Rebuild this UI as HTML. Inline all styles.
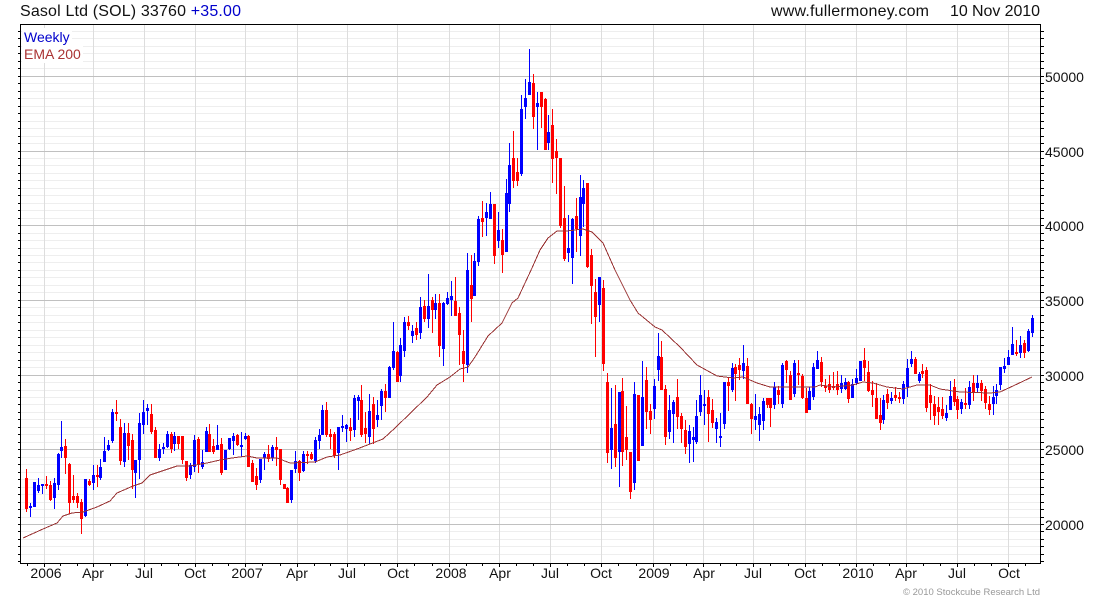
<!DOCTYPE html>
<html><head><meta charset="utf-8"><title>Sasol Ltd (SOL)</title>
<style>
html,body{margin:0;padding:0;background:#fff}
svg{display:block;position:absolute;left:0;top:0}
text{font-family:"Liberation Sans",Arial,sans-serif;font-size:14px;fill:#111}
.r{fill:#f00}.b{fill:#00f}
</style></head><body>
<svg width="1100" height="600" viewBox="0 0 1100 600" xmlns="http://www.w3.org/2000/svg">
<g shape-rendering="crispEdges">
<path fill="none" stroke="#eeeeee" d="M21 554.5H1040M21 546.5H1040M21 539.5H1040M21 531.5H1040M21 517.5H1040M21 509.5H1040M21 502.5H1040M21 494.5H1040M21 487.5H1040M21 479.5H1040M21 472.5H1040M21 464.5H1040M21 457.5H1040M21 442.5H1040M21 434.5H1040M21 427.5H1040M21 419.5H1040M21 412.5H1040M21 404.5H1040M21 397.5H1040M21 390.5H1040M21 382.5H1040M21 367.5H1040M21 360.5H1040M21 352.5H1040M21 345.5H1040M21 337.5H1040M21 330.5H1040M21 322.5H1040M21 315.5H1040M21 307.5H1040M21 292.5H1040M21 285.5H1040M21 277.5H1040M21 270.5H1040M21 262.5H1040M21 255.5H1040M21 248.5H1040M21 240.5H1040M21 233.5H1040M21 218.5H1040M21 210.5H1040M21 203.5H1040M21 195.5H1040M21 188.5H1040M21 180.5H1040M21 173.5H1040M21 165.5H1040M21 158.5H1040M21 143.5H1040M21 136.5H1040M21 128.5H1040M21 121.5H1040M21 113.5H1040M21 106.5H1040M21 98.5H1040M21 91.5H1040M21 83.5H1040M21 68.5H1040M21 61.5H1040M21 53.5H1040M21 46.5H1040M21 38.5H1040M21 31.5H1040"/>
<path fill="none" stroke="#dddddd" d="M44.5 25V563M93.5 25V563M144.5 25V563M195.5 25V563M245.5 25V563M297.5 25V563M347.5 25V563M397.5 25V563M449.5 25V563M499.5 25V563M550.5 25V563M601.5 25V563M653.5 25V563M703.5 25V563M753.5 25V563M805.5 25V563M856.5 25V563M906.5 25V563M957.5 25V563M1008.5 25V563"/>
<path fill="none" stroke="#c0c0c0" d="M21 524.5H1040M21 449.5H1040M21 375.5H1040M21 300.5H1040M21 225.5H1040M21 151.5H1040M21 76.5H1040"/>
<rect x="22" y="28" width="50" height="18" fill="#fff"/>
<rect x="22" y="46" width="61" height="17" fill="#fff"/>
<path class="r" d="M26 469h1V512h-1zM25 478h3V509h-3z"/>
<path class="b" d="M30 503h1V517h-1zM29 506h3V508h-3z"/>
<path class="b" d="M33 482h3V507h-3z"/>
<path class="b" d="M38 478h1V493h-1zM37 485h3V491h-3z"/>
<path class="b" d="M42 484h1V494h-1zM41 484h3V486h-3z"/>
<path class="r" d="M46 476h1V489h-1zM45 484h3V486h-3z"/>
<path class="r" d="M50 481h1V501h-1zM49 485h3V500h-3z"/>
<path class="b" d="M54 478h1V509h-1zM53 483h3V498h-3z"/>
<path class="b" d="M58 453h1V490h-1zM57 454h3V485h-3z"/>
<path class="b" d="M61 421h1V458h-1zM60 447h3V451h-3z"/>
<path class="r" d="M65 439h1V474h-1zM64 446h3V458h-3z"/>
<path class="r" d="M69 463h1V514h-1zM68 464h3V503h-3z"/>
<path class="r" d="M73 475h1V503h-1zM72 496h3V500h-3z"/>
<path class="r" d="M77 493h1V508h-1zM76 496h3V503h-3z"/>
<path class="r" d="M81 499h1V534h-1zM80 502h3V519h-3z"/>
<path class="b" d="M85 479h1V517h-1zM84 479h3V516h-3z"/>
<path class="r" d="M89 479h1V486h-1zM88 481h3V485h-3z"/>
<path class="b" d="M93 465h1V490h-1zM92 475h3V483h-3z"/>
<path class="r" d="M97 465h1V487h-1zM96 475h3V477h-3z"/>
<path class="b" d="M100 459h1V480h-1zM99 467h3V478h-3z"/>
<path class="b" d="M104 437h1V462h-1zM103 451h3V462h-3z"/>
<path class="b" d="M108 440h1V451h-1zM107 445h3V450h-3z"/>
<path class="b" d="M112 409h1V443h-1zM111 412h3V441h-3z"/>
<path class="r" d="M116 400h1V421h-1zM115 412h3V414h-3z"/>
<path class="r" d="M120 419h1V465h-1zM119 427h3V461h-3z"/>
<path class="b" d="M124 423h1V467h-1zM123 433h3V462h-3z"/>
<path class="r" d="M128 423h1V460h-1zM127 433h3V446h-3z"/>
<path class="r" d="M132 434h1V489h-1zM131 440h3V470h-3z"/>
<path class="b" d="M135 460h1V498h-1zM134 460h3V473h-3z"/>
<path class="b" d="M139 413h1V479h-1zM138 423h3V460h-3z"/>
<path class="b" d="M143 400h1V434h-1zM142 412h3V425h-3z"/>
<path class="b" d="M147 404h1V425h-1zM146 408h3V411h-3z"/>
<path class="r" d="M151 404h1V434h-1zM150 414h3V432h-3z"/>
<path class="r" d="M155 427h1V458h-1zM154 430h3V458h-3z"/>
<path class="b" d="M159 444h1V461h-1zM158 449h3V458h-3z"/>
<path class="b" d="M163 443h1V454h-1zM162 447h3V449h-3z"/>
<path class="b" d="M167 431h1V448h-1zM166 434h3V447h-3z"/>
<path class="r" d="M171 432h1V453h-1zM170 434h3V449h-3z"/>
<path class="b" d="M174 432h1V451h-1zM173 436h3V444h-3z"/>
<path class="r" d="M178 436h1V449h-1zM177 436h3V444h-3z"/>
<path class="r" d="M182 436h1V464h-1zM181 436h3V460h-3z"/>
<path class="r" d="M186 461h1V481h-1zM185 461h3V478h-3z"/>
<path class="b" d="M190 463h1V479h-1zM189 465h3V475h-3z"/>
<path class="b" d="M194 435h1V472h-1zM193 440h3V467h-3z"/>
<path class="r" d="M198 437h1V473h-1zM197 439h3V464h-3z"/>
<path class="b" d="M202 450h1V469h-1zM201 462h3V467h-3z"/>
<path class="b" d="M206 427h1V452h-1zM205 431h3V452h-3z"/>
<path class="r" d="M209 424h1V452h-1zM208 434h3V452h-3z"/>
<path class="r" d="M213 439h1V454h-1zM212 446h3V452h-3z"/>
<path class="b" d="M217 425h1V450h-1zM216 445h3V450h-3z"/>
<path class="r" d="M221 438h1V475h-1zM220 444h3V473h-3z"/>
<path class="b" d="M225 450h1V470h-1zM224 450h3V470h-3z"/>
<path class="b" d="M229 438h1V450h-1zM228 438h3V449h-3z"/>
<path class="b" d="M233 433h1V455h-1zM232 436h3V441h-3z"/>
<path class="r" d="M237 434h1V446h-1zM236 435h3V445h-3z"/>
<path class="b" d="M241 432h1V457h-1zM240 445h3V447h-3z"/>
<path class="b" d="M245 433h1V440h-1zM244 436h3V439h-3z"/>
<path class="r" d="M248 435h1V467h-1zM247 436h3V467h-3z"/>
<path class="r" d="M252 460h1V482h-1zM251 463h3V482h-3z"/>
<path class="r" d="M256 468h1V490h-1zM255 476h3V485h-3z"/>
<path class="b" d="M260 459h1V483h-1zM259 459h3V480h-3z"/>
<path class="b" d="M264 452h1V470h-1zM263 454h3V458h-3z"/>
<path class="r" d="M268 445h1V462h-1zM267 454h3V459h-3z"/>
<path class="b" d="M272 445h1V461h-1zM271 447h3V458h-3z"/>
<path class="r" d="M276 437h1V466h-1zM275 447h3V450h-3z"/>
<path class="r" d="M280 449h1V485h-1zM279 449h3V480h-3z"/>
<path class="r" d="M284 484h1V489h-1zM283 484h3V489h-3z"/>
<path class="r" d="M287 487h1V503h-1zM286 488h3V503h-3z"/>
<path class="b" d="M291 470h1V503h-1zM290 470h3V500h-3z"/>
<path class="b" d="M295 451h1V473h-1zM294 461h3V469h-3z"/>
<path class="r" d="M299 460h1V481h-1zM298 461h3V473h-3z"/>
<path class="b" d="M303 451h1V472h-1zM302 454h3V471h-3z"/>
<path class="r" d="M307 451h1V464h-1zM306 454h3V456h-3z"/>
<path class="r" d="M311 452h1V460h-1zM310 454h3V459h-3z"/>
<path class="b" d="M315 437h1V463h-1zM314 440h3V461h-3z"/>
<path class="b" d="M319 429h1V449h-1zM318 435h3V441h-3z"/>
<path class="b" d="M322 405h1V435h-1zM321 410h3V435h-3z"/>
<path class="r" d="M326 402h1V437h-1zM325 410h3V435h-3z"/>
<path class="r" d="M330 429h1V449h-1zM329 434h3V437h-3z"/>
<path class="r" d="M334 432h1V458h-1zM333 434h3V456h-3z"/>
<path class="b" d="M338 427h1V470h-1zM337 427h3V453h-3z"/>
<path class="b" d="M342 415h1V432h-1zM341 426h3V428h-3z"/>
<path class="b" d="M346 424h1V442h-1zM345 425h3V429h-3z"/>
<path class="r" d="M350 418h1V441h-1zM349 427h3V431h-3z"/>
<path class="b" d="M354 395h1V437h-1zM353 398h3V430h-3z"/>
<path class="b" d="M358 395h1V420h-1zM357 397h3V401h-3z"/>
<path class="r" d="M361 385h1V437h-1zM360 400h3V435h-3z"/>
<path class="r" d="M365 412h1V443h-1zM364 428h3V434h-3z"/>
<path class="b" d="M369 394h1V444h-1zM368 411h3V437h-3z"/>
<path class="r" d="M373 397h1V444h-1zM372 404h3V429h-3z"/>
<path class="b" d="M377 400h1V427h-1zM376 415h3V420h-3z"/>
<path class="b" d="M381 389h1V420h-1zM380 391h3V406h-3z"/>
<path class="r" d="M385 384h1V412h-1zM384 391h3V398h-3z"/>
<path class="b" d="M389 366h1V398h-1zM388 367h3V398h-3z"/>
<path class="b" d="M393 322h1V370h-1zM392 351h3V368h-3z"/>
<path class="r" d="M397 351h1V382h-1zM396 352h3V382h-3z"/>
<path class="b" d="M400 338h1V382h-1zM399 345h3V376h-3z"/>
<path class="b" d="M404 317h1V357h-1zM403 322h3V351h-3z"/>
<path class="r" d="M408 316h1V330h-1zM407 322h3V326h-3z"/>
<path class="b" d="M412 325h1V343h-1zM411 331h3V336h-3z"/>
<path class="r" d="M416 322h1V340h-1zM415 328h3V335h-3z"/>
<path class="b" d="M420 297h1V339h-1zM419 307h3V333h-3z"/>
<path class="r" d="M424 300h1V322h-1zM423 306h3V319h-3z"/>
<path class="b" d="M428 274h1V328h-1zM427 306h3V319h-3z"/>
<path class="r" d="M432 297h1V333h-1zM431 300h3V310h-3z"/>
<path class="b" d="M435 294h1V319h-1zM434 303h3V310h-3z"/>
<path class="r" d="M439 294h1V357h-1zM438 303h3V346h-3z"/>
<path class="b" d="M443 302h1V366h-1zM442 303h3V349h-3z"/>
<path class="b" d="M447 292h1V305h-1zM446 298h3V304h-3z"/>
<path class="b" d="M451 281h1V316h-1zM450 296h3V300h-3z"/>
<path class="r" d="M455 277h1V316h-1zM454 301h3V316h-3z"/>
<path class="r" d="M459 307h1V365h-1zM458 313h3V335h-3z"/>
<path class="r" d="M463 330h1V382h-1zM462 351h3V364h-3z"/>
<path class="b" d="M467 253h1V373h-1zM466 270h3V365h-3z"/>
<path class="r" d="M471 255h1V322h-1zM470 285h3V299h-3z"/>
<path class="b" d="M474 253h1V296h-1zM473 261h3V296h-3z"/>
<path class="b" d="M478 216h1V266h-1zM477 219h3V262h-3z"/>
<path class="r" d="M482 201h1V237h-1zM481 218h3V222h-3z"/>
<path class="b" d="M486 203h1V236h-1zM485 212h3V218h-3z"/>
<path class="b" d="M490 192h1V219h-1zM489 204h3V219h-3z"/>
<path class="r" d="M494 204h1V264h-1zM493 204h3V256h-3z"/>
<path class="b" d="M498 212h1V248h-1zM497 230h3V241h-3z"/>
<path class="r" d="M502 229h1V273h-1zM501 240h3V255h-3z"/>
<path class="b" d="M506 179h1V252h-1zM505 193h3V252h-3z"/>
<path class="b" d="M509 143h1V212h-1zM508 165h3V204h-3z"/>
<path class="r" d="M513 131h1V188h-1zM512 158h3V181h-3z"/>
<path class="r" d="M517 158h1V186h-1zM516 172h3V181h-3z"/>
<path class="b" d="M521 95h1V176h-1zM520 109h3V174h-3z"/>
<path class="b" d="M525 79h1V119h-1zM524 98h3V107h-3z"/>
<path class="b" d="M529 49h1V95h-1zM528 82h3V95h-3z"/>
<path class="r" d="M533 74h1V129h-1zM532 83h3V117h-3z"/>
<path class="b" d="M537 92h1V150h-1zM536 103h3V107h-3z"/>
<path class="r" d="M541 92h1V128h-1zM540 92h3V107h-3z"/>
<path class="r" d="M545 98h1V150h-1zM544 99h3V150h-3z"/>
<path class="b" d="M548 115h1V150h-1zM547 132h3V143h-3z"/>
<path class="r" d="M552 109h1V183h-1zM551 125h3V159h-3z"/>
<path class="r" d="M556 139h1V194h-1zM555 151h3V158h-3z"/>
<path class="r" d="M560 158h1V228h-1zM559 158h3V226h-3z"/>
<path class="r" d="M564 186h1V261h-1zM563 218h3V259h-3z"/>
<path class="b" d="M568 215h1V262h-1zM567 248h3V253h-3z"/>
<path class="b" d="M572 218h1V284h-1zM571 219h3V258h-3z"/>
<path class="r" d="M576 198h1V252h-1zM575 216h3V229h-3z"/>
<path class="b" d="M580 175h1V256h-1zM579 197h3V236h-3z"/>
<path class="b" d="M583 180h1V227h-1zM582 188h3V204h-3z"/>
<path class="r" d="M587 183h1V268h-1zM586 183h3V267h-3z"/>
<path class="r" d="M591 249h1V324h-1zM590 255h3V286h-3z"/>
<path class="r" d="M595 279h1V357h-1zM594 292h3V317h-3z"/>
<path class="b" d="M599 277h1V322h-1zM598 277h3V305h-3z"/>
<path class="r" d="M603 280h1V371h-1zM602 288h3V364h-3z"/>
<path class="r" d="M607 373h1V463h-1zM606 382h3V453h-3z"/>
<path class="b" d="M611 388h1V469h-1zM610 428h3V450h-3z"/>
<path class="r" d="M615 385h1V467h-1zM614 424h3V458h-3z"/>
<path class="b" d="M619 392h1V487h-1zM618 392h3V452h-3z"/>
<path class="r" d="M622 378h1V466h-1zM621 391h3V452h-3z"/>
<path class="r" d="M626 406h1V460h-1zM625 437h3V450h-3z"/>
<path class="r" d="M630 452h1V499h-1zM629 452h3V492h-3z"/>
<path class="b" d="M634 382h1V490h-1zM633 394h3V483h-3z"/>
<path class="r" d="M638 395h1V461h-1zM637 395h3V461h-3z"/>
<path class="b" d="M642 361h1V446h-1zM641 397h3V446h-3z"/>
<path class="r" d="M646 367h1V429h-1zM645 380h3V412h-3z"/>
<path class="r" d="M650 404h1V434h-1zM649 411h3V420h-3z"/>
<path class="b" d="M654 379h1V419h-1zM653 386h3V409h-3z"/>
<path class="b" d="M658 333h1V381h-1zM657 356h3V370h-3z"/>
<path class="r" d="M661 341h1V390h-1zM660 357h3V390h-3z"/>
<path class="r" d="M665 385h1V445h-1zM664 389h3V437h-3z"/>
<path class="b" d="M669 395h1V439h-1zM668 410h3V432h-3z"/>
<path class="b" d="M673 400h1V443h-1zM672 402h3V414h-3z"/>
<path class="r" d="M677 379h1V429h-1zM676 397h3V417h-3z"/>
<path class="r" d="M681 413h1V443h-1zM680 416h3V429h-3z"/>
<path class="r" d="M685 420h1V454h-1zM684 430h3V447h-3z"/>
<path class="b" d="M689 425h1V463h-1zM688 431h3V444h-3z"/>
<path class="b" d="M693 427h1V462h-1zM692 437h3V440h-3z"/>
<path class="b" d="M696 400h1V444h-1zM695 416h3V442h-3z"/>
<path class="b" d="M700 375h1V416h-1zM699 395h3V412h-3z"/>
<path class="b" d="M704 390h1V425h-1zM703 404h3V406h-3z"/>
<path class="r" d="M708 390h1V442h-1zM707 397h3V414h-3z"/>
<path class="r" d="M712 399h1V428h-1zM711 410h3V423h-3z"/>
<path class="b" d="M716 418h1V443h-1zM715 422h3V429h-3z"/>
<path class="b" d="M720 413h1V447h-1zM719 436h3V438h-3z"/>
<path class="b" d="M724 382h1V429h-1zM723 382h3V424h-3z"/>
<path class="r" d="M728 378h1V411h-1zM727 382h3V386h-3z"/>
<path class="b" d="M732 363h1V392h-1zM731 368h3V390h-3z"/>
<path class="r" d="M735 364h1V401h-1zM734 367h3V374h-3z"/>
<path class="r" d="M739 358h1V380h-1zM738 365h3V370h-3z"/>
<path class="b" d="M743 345h1V379h-1zM742 363h3V371h-3z"/>
<path class="r" d="M747 358h1V404h-1zM746 366h3V404h-3z"/>
<path class="r" d="M751 403h1V434h-1zM750 404h3V419h-3z"/>
<path class="b" d="M755 394h1V430h-1zM754 416h3V420h-3z"/>
<path class="b" d="M759 407h1V441h-1zM758 414h3V425h-3z"/>
<path class="b" d="M763 398h1V430h-1zM762 401h3V421h-3z"/>
<path class="r" d="M767 398h1V408h-1zM766 398h3V405h-3z"/>
<path class="r" d="M770 398h1V427h-1zM769 398h3V408h-3z"/>
<path class="b" d="M774 382h1V409h-1zM773 387h3V405h-3z"/>
<path class="r" d="M778 386h1V404h-1zM777 390h3V395h-3z"/>
<path class="b" d="M782 363h1V408h-1zM781 365h3V404h-3z"/>
<path class="r" d="M786 360h1V383h-1zM785 361h3V370h-3z"/>
<path class="r" d="M790 371h1V400h-1zM789 375h3V400h-3z"/>
<path class="b" d="M794 360h1V397h-1zM793 363h3V394h-3z"/>
<path class="r" d="M798 360h1V385h-1zM797 373h3V375h-3z"/>
<path class="r" d="M802 374h1V399h-1zM801 376h3V398h-3z"/>
<path class="r" d="M806 388h1V413h-1zM805 398h3V413h-3z"/>
<path class="b" d="M809 387h1V410h-1zM808 391h3V410h-3z"/>
<path class="b" d="M813 363h1V400h-1zM812 367h3V397h-3z"/>
<path class="b" d="M817 351h1V369h-1zM816 360h3V369h-3z"/>
<path class="r" d="M821 357h1V387h-1zM820 362h3V382h-3z"/>
<path class="r" d="M825 379h1V392h-1zM824 386h3V388h-3z"/>
<path class="r" d="M829 375h1V393h-1zM828 384h3V390h-3z"/>
<path class="r" d="M833 372h1V390h-1zM832 386h3V388h-3z"/>
<path class="r" d="M837 371h1V395h-1zM836 384h3V390h-3z"/>
<path class="b" d="M841 375h1V393h-1zM840 383h3V389h-3z"/>
<path class="b" d="M845 378h1V390h-1zM844 382h3V389h-3z"/>
<path class="r" d="M848 381h1V403h-1zM847 382h3V399h-3z"/>
<path class="b" d="M852 379h1V398h-1zM851 384h3V398h-3z"/>
<path class="b" d="M856 369h1V385h-1zM855 378h3V383h-3z"/>
<path class="b" d="M860 361h1V381h-1zM859 361h3V381h-3z"/>
<path class="r" d="M864 348h1V381h-1zM863 360h3V368h-3z"/>
<path class="r" d="M868 361h1V392h-1zM867 372h3V391h-3z"/>
<path class="r" d="M872 381h1V407h-1zM871 390h3V395h-3z"/>
<path class="r" d="M876 383h1V419h-1zM875 398h3V419h-3z"/>
<path class="r" d="M880 398h1V430h-1zM879 415h3V423h-3z"/>
<path class="b" d="M883 395h1V424h-1zM882 400h3V420h-3z"/>
<path class="r" d="M887 389h1V409h-1zM886 394h3V403h-3z"/>
<path class="b" d="M891 392h1V404h-1zM890 398h3V401h-3z"/>
<path class="r" d="M895 387h1V401h-1zM894 395h3V398h-3z"/>
<path class="r" d="M899 392h1V403h-1zM898 397h3V399h-3z"/>
<path class="b" d="M903 381h1V404h-1zM902 384h3V399h-3z"/>
<path class="b" d="M907 359h1V397h-1zM906 368h3V387h-3z"/>
<path class="b" d="M911 351h1V367h-1zM910 359h3V364h-3z"/>
<path class="r" d="M915 357h1V374h-1zM914 359h3V374h-3z"/>
<path class="b" d="M919 372h1V383h-1zM918 374h3V381h-3z"/>
<path class="r" d="M922 364h1V378h-1zM921 371h3V374h-3z"/>
<path class="r" d="M926 367h1V412h-1zM925 370h3V408h-3z"/>
<path class="r" d="M930 384h1V420h-1zM929 395h3V403h-3z"/>
<path class="r" d="M934 396h1V425h-1zM933 404h3V416h-3z"/>
<path class="r" d="M938 397h1V425h-1zM937 407h3V412h-3z"/>
<path class="r" d="M942 397h1V419h-1zM941 409h3V416h-3z"/>
<path class="b" d="M946 405h1V421h-1zM945 413h3V418h-3z"/>
<path class="b" d="M950 381h1V410h-1zM949 396h3V410h-3z"/>
<path class="r" d="M954 379h1V406h-1zM953 387h3V402h-3z"/>
<path class="r" d="M957 396h1V419h-1zM956 399h3V410h-3z"/>
<path class="b" d="M961 399h1V414h-1zM960 402h3V409h-3z"/>
<path class="r" d="M965 388h1V409h-1zM964 403h3V405h-3z"/>
<path class="b" d="M969 381h1V409h-1zM968 387h3V405h-3z"/>
<path class="r" d="M973 375h1V401h-1zM972 383h3V393h-3z"/>
<path class="b" d="M977 375h1V392h-1zM976 383h3V388h-3z"/>
<path class="r" d="M981 380h1V401h-1zM980 383h3V391h-3z"/>
<path class="r" d="M985 386h1V409h-1zM984 389h3V403h-3z"/>
<path class="r" d="M989 396h1V415h-1zM988 404h3V410h-3z"/>
<path class="b" d="M993 386h1V415h-1zM992 397h3V404h-3z"/>
<path class="b" d="M996 384h1V404h-1zM995 390h3V396h-3z"/>
<path class="b" d="M1000 367h1V390h-1zM999 367h3V385h-3z"/>
<path class="b" d="M1004 358h1V373h-1zM1003 366h3V369h-3z"/>
<path class="b" d="M1008 350h1V365h-1zM1007 357h3V365h-3z"/>
<path class="b" d="M1012 327h1V355h-1zM1011 344h3V355h-3z"/>
<path class="r" d="M1016 340h1V356h-1zM1015 352h3V354h-3z"/>
<path class="b" d="M1020 336h1V358h-1zM1019 345h3V353h-3z"/>
<path class="r" d="M1024 340h1V358h-1zM1023 343h3V353h-3z"/>
<path class="b" d="M1028 329h1V352h-1zM1027 331h3V351h-3z"/>
<path class="b" d="M1032 315h1V337h-1zM1031 318h3V333h-3z"/>
<polyline fill="none" stroke="#993333" stroke-width="1" points="23,538 43,529 57,523 63,516 72,513 83,512 97,507 110,501 117,493 133,486 142,483 150,475 165,470 177,466 190,466 207,463 220,460 232,458 247,456 257,458 277,458 290,463 315,462 327,457 340,455 357,449 383,439 395,428 427,397 437,385 450,377 460,369 468,367 475,357 488,336 502,323 512,303 518,298 532,268 540,250 548,238 557,231 567,231 583,229 592,232 603,243 615,270 630,300 638,313 655,327 662,330 680,347 697,365 717,376 733,378 743,377 757,383 770,387 793,387 815,387 820,385 833,387 853,385 863,382 873,383 887,387 903,389 917,385 930,385 940,389 960,392 990,393 1000,392 1013,386 1032,377"/>
<path fill="none" stroke="#000" d="M20.5 24V564M1040.5 24V564M20 24.5H1041M20 563.5H1041"/>
<path fill="none" stroke="#000" d="M18 561.5h2M18 554.5h2M18 546.5h2M18 539.5h2M18 531.5h2M18 524.5h2M18 517.5h2M18 509.5h2M18 502.5h2M18 494.5h2M18 487.5h2M18 479.5h2M18 472.5h2M18 464.5h2M18 457.5h2M18 449.5h2M18 442.5h2M18 434.5h2M18 427.5h2M18 419.5h2M18 412.5h2M18 404.5h2M18 397.5h2M18 390.5h2M18 382.5h2M18 375.5h2M18 367.5h2M18 360.5h2M18 352.5h2M18 345.5h2M18 337.5h2M18 330.5h2M18 322.5h2M18 315.5h2M18 307.5h2M18 300.5h2M18 292.5h2M18 285.5h2M18 277.5h2M18 270.5h2M18 262.5h2M18 255.5h2M18 248.5h2M18 240.5h2M18 233.5h2M18 225.5h2M18 218.5h2M18 210.5h2M18 203.5h2M18 195.5h2M18 188.5h2M18 180.5h2M18 173.5h2M18 165.5h2M18 158.5h2M18 151.5h2M18 143.5h2M18 136.5h2M18 128.5h2M18 121.5h2M18 113.5h2M18 106.5h2M18 98.5h2M18 91.5h2M18 83.5h2M18 76.5h2M18 68.5h2M18 61.5h2M18 53.5h2M18 46.5h2M18 38.5h2M18 31.5h2"/>
<path fill="none" stroke="#000" d="M1041 561.5h3M1041 554.5h3M1041 546.5h3M1041 539.5h3M1041 531.5h3M1041 524.5h3M1041 517.5h3M1041 509.5h3M1041 502.5h3M1041 494.5h3M1041 487.5h3M1041 479.5h3M1041 472.5h3M1041 464.5h3M1041 457.5h3M1041 449.5h3M1041 442.5h3M1041 434.5h3M1041 427.5h3M1041 419.5h3M1041 412.5h3M1041 404.5h3M1041 397.5h3M1041 390.5h3M1041 382.5h3M1041 375.5h3M1041 367.5h3M1041 360.5h3M1041 352.5h3M1041 345.5h3M1041 337.5h3M1041 330.5h3M1041 322.5h3M1041 315.5h3M1041 307.5h3M1041 300.5h3M1041 292.5h3M1041 285.5h3M1041 277.5h3M1041 270.5h3M1041 262.5h3M1041 255.5h3M1041 248.5h3M1041 240.5h3M1041 233.5h3M1041 225.5h3M1041 218.5h3M1041 210.5h3M1041 203.5h3M1041 195.5h3M1041 188.5h3M1041 180.5h3M1041 173.5h3M1041 165.5h3M1041 158.5h3M1041 151.5h3M1041 143.5h3M1041 136.5h3M1041 128.5h3M1041 121.5h3M1041 113.5h3M1041 106.5h3M1041 98.5h3M1041 91.5h3M1041 83.5h3M1041 76.5h3M1041 68.5h3M1041 61.5h3M1041 53.5h3M1041 46.5h3M1041 38.5h3M1041 31.5h3"/>
<path fill="none" stroke="#000" d="M27.5 564v2M60.5 564v2M77.5 564v2M110.5 564v2M127.5 564v2M161.5 564v2M178.5 564v2M212.5 564v2M228.5 564v2M262.5 564v2M280.5 564v2M314.5 564v2M330.5 564v2M364.5 564v2M380.5 564v2M414.5 564v2M432.5 564v2M466.5 564v2M482.5 564v2M516.5 564v2M533.5 564v2M567.5 564v2M584.5 564v2M618.5 564v2M636.5 564v2M670.5 564v2M686.5 564v2M720.5 564v2M736.5 564v2M770.5 564v2M788.5 564v2M822.5 564v2M839.5 564v2M873.5 564v2M889.5 564v2M923.5 564v2M940.5 564v2M974.5 564v2M991.5 564v2M1025.5 564v2"/>
<path fill="none" stroke="#000" d="M44.5 564v3M93.5 564v3M144.5 564v3M195.5 564v3M245.5 564v3M297.5 564v3M347.5 564v3M397.5 564v3M449.5 564v3M499.5 564v3M550.5 564v3M601.5 564v3M653.5 564v3M703.5 564v3M753.5 564v3M805.5 564v3M856.5 564v3M906.5 564v3M957.5 564v3M1008.5 564v3"/>
</g>
<text x="20" y="16" style="font-size:16px" textLength="221" lengthAdjust="spacing">Sasol Ltd (SOL) 33760 <tspan style="fill:#0000cc">+35.00</tspan></text>
<text x="771" y="16" style="font-size:16px" textLength="158" lengthAdjust="spacing">www.fullermoney.com</text>
<text x="950" y="16" style="font-size:16px" textLength="90" lengthAdjust="spacing">10 Nov 2010</text>
<text x="24" y="42" style="fill:#0000cc">Weekly</text>
<text x="24" y="59" style="fill:#aa3333">EMA 200</text>
<text x="1045" y="82">50000</text>
<text x="1045" y="157">45000</text>
<text x="1045" y="231">40000</text>
<text x="1045" y="306">35000</text>
<text x="1045" y="381">30000</text>
<text x="1045" y="455">25000</text>
<text x="1045" y="530">20000</text>
<g text-anchor="middle">
<text x="46" y="578">2006</text><text x="93" y="578">Apr</text><text x="144" y="578">Jul</text><text x="195" y="578">Oct</text>
<text x="247" y="578">2007</text><text x="297" y="578">Apr</text><text x="347" y="578">Jul</text><text x="398" y="578">Oct</text>
<text x="451" y="578">2008</text><text x="500" y="578">Apr</text><text x="550" y="578">Jul</text><text x="601" y="578">Oct</text>
<text x="654" y="578">2009</text><text x="704" y="578">Apr</text><text x="753" y="578">Jul</text><text x="805" y="578">Oct</text>
<text x="858" y="578">2010</text><text x="906" y="578">Apr</text><text x="957" y="578">Jul</text><text x="1009" y="578">Oct</text>
</g>
<text x="903" y="595" style="font-size:9.5px;fill:#999" textLength="137" lengthAdjust="spacing">© 2010 Stockcube Research Ltd</text>
</svg>
</body></html>
